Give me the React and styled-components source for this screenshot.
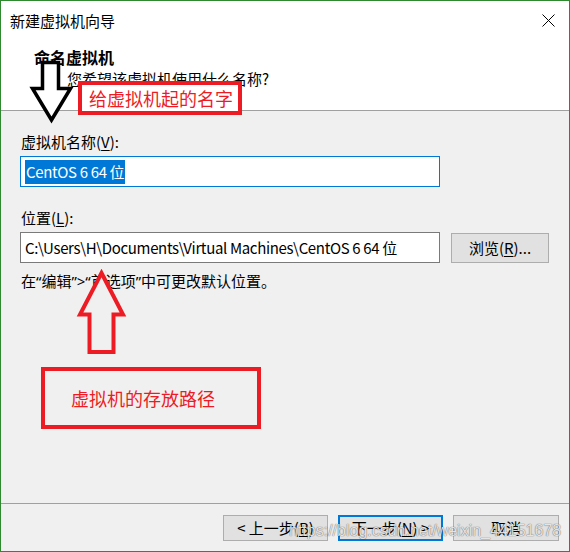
import styled, { createGlobalStyle } from "styled-components";

const GlobalStyle = createGlobalStyle`
  html, body {
    margin: 0;
    padding: 0;
    background: #ffffff;
  }
  * {
    box-sizing: border-box;
  }
`;

const RED = "#ed1c24";

const Window = styled.div`
  position: relative;
  width: 570px;
  height: 552px;
  border: 1px solid #2f8a2f;
  display: flex;
  flex-direction: column;
  background: #f0f0f0;
  font-family: "Noto Sans CJK SC", "Noto Sans", sans-serif;
  font-size: 15px;
  color: #000;
  overflow: hidden;
`;

const Top = styled.div`
  background: #fff;
  height: 110px;
  border-bottom: 1px solid #a0a0a0;
  display: flex;
  flex-direction: column;
`;

const TitleBar = styled.div`
  height: 39px;
  display: flex;
  align-items: center;
  justify-content: space-between;
  padding: 0 14px 0 9px;
  line-height: 20px;
`;

const CloseBtn = styled.div`
  width: 14px;
  height: 14px;
  display: flex;
  align-items: center;
  justify-content: center;
`;

const Heading = styled.div`
  margin-top: 6px;
  padding-left: 33px;
  font-weight: bold;
  font-size: 16px;
  line-height: 22px;
`;

const SubHeading = styled.div`
  padding-left: 66px;
  line-height: 22px;
`;

const Body = styled.div`
  flex: 1;
  padding: 21px 0 0 19px;
  display: flex;
  flex-direction: column;
`;

const Label = styled.div`
  padding-left: 1px;
  line-height: 20px;
  margin-top: ${(p) => p.$mt || 0}px;
  margin-bottom: 4px;
  u {
    text-decoration: underline;
    text-underline-offset: 2px;
  }
`;

const Hint = styled.div`
  padding-left: 1px;
  line-height: 20px;
  font-family: "Noto Sans", "Noto Sans CJK SC", sans-serif;
`;

const Field = styled.div`
  width: 420px;
  height: 31px;
  background: #fff;
  border: 1px solid ${(p) => (p.$focused ? "#0078d7" : "#7a7a7a")};
  display: flex;
  align-items: center;
  padding-left: 4px;
  white-space: nowrap;
  overflow: hidden;
  letter-spacing: -0.35px;
`;

const Selected = styled.span`
  background: #0078d7;
  color: #fff;
  line-height: 24px;
  padding: 0 1px;
`;

const FieldRow = styled.div`
  display: flex;
  align-items: center;
  gap: 11px;
  margin-bottom: 8px;
`;

const Button = styled.div`
  width: ${(p) => p.$w || 105}px;
  height: ${(p) => p.$h || 26}px;
  background: #e1e1e1;
  border: ${(p) => (p.$default ? "2px solid #0078d7" : "1px solid #adadad")};
  display: flex;
  align-items: center;
  justify-content: center;
  line-height: 20px;
  u {
    text-decoration: underline;
    text-underline-offset: 2px;
  }
`;

const Footer = styled.div`
  height: 48px;
  border-top: 1px solid #a0a0a0;
  display: flex;
  justify-content: flex-end;
  align-items: flex-start;
  padding: 11px 10px 0 0;
  gap: 10px;
`;

/* annotations drawn over the dialog */
const Overlay = styled.div`
  position: absolute;
  left: ${(p) => p.$x}px;
  top: ${(p) => p.$y}px;
  pointer-events: none;
`;

const Callout = styled.div`
  position: absolute;
  left: ${(p) => p.$x}px;
  top: ${(p) => p.$y}px;
  width: ${(p) => p.$w}px;
  height: ${(p) => p.$h}px;
  border: 4px solid ${RED};
  background: ${(p) => p.$bg};
  color: ${RED};
  font-size: 18px;
  line-height: 24px;
  display: flex;
  align-items: center;
  padding-left: ${(p) => p.$pl}px;
  white-space: nowrap;
`;

const Watermark = styled.div`
  position: absolute;
  left: 288px;
  top: 519px;
  font-family: "Liberation Sans", Arial, sans-serif;
  font-size: 16px;
  line-height: 22px;
  color: rgba(255, 255, 255, 0.85);
  text-shadow: 0 0 1px rgba(0, 0, 0, 0.55), 0 0 1px rgba(0, 0, 0, 0.35);
  white-space: nowrap;
  pointer-events: none;
`;

const App = () => {
  return (
    <>
      <GlobalStyle />
      <Window>
        <Top>
          <TitleBar>
            <span>新建虚拟机向导</span>
            <CloseBtn>
              <svg width="13" height="13" viewBox="0 0 13 13">
                <path d="M0.5 0.5 L12.5 12.5 M12.5 0.5 L0.5 12.5" stroke="#000" strokeWidth="1" />
              </svg>
            </CloseBtn>
          </TitleBar>
          <Heading>命名虚拟机</Heading>
          <SubHeading>您希望该虚拟机使用什么名称?</SubHeading>
        </Top>

        <Body>
          <Label>
            虚拟机名称(<u>V</u>):
          </Label>
          <Field $focused>
            <Selected>CentOS 6 64 位</Selected>
          </Field>

          <Label $mt={21}>
            位置(<u>L</u>):
          </Label>
          <FieldRow>
            <Field>C:\Users\H\Documents\Virtual Machines\CentOS 6 64 位</Field>
            <Button $w={98} $h={30}>
              浏览(<u>R</u>)...
            </Button>
          </FieldRow>
          <Hint>在“编辑”&gt;“首选项”中可更改默认位置。</Hint>
        </Body>

        <Footer>
          <Button>
            &lt; 上一步(<u>B</u>)
          </Button>
          <Button $default>
            下一步(<u>N</u>) &gt;
          </Button>
          <Button $w={106}>取消</Button>
        </Footer>

        <Overlay $x={28} $y={58}>
          <svg width="46" height="66" viewBox="0 0 46 66">
            <path
              d="M13.5 3.5 H29.5 V29.5 H41.5 L22.5 61 L3.5 29.5 H13.5 Z"
              fill="#fff"
              stroke="#000"
              strokeWidth="3.5"
              strokeLinejoin="miter"
            />
          </svg>
        </Overlay>

        <Callout $x={77} $y={80} $w={164} $h={34} $bg="#fff" $pl={7}>
          给虚拟机起的名字
        </Callout>

        <Overlay $x={74} $y={268}>
          <svg width="54" height="88" viewBox="0 0 54 88">
            <path
              d="M26.5 4 L48 45.5 H38.5 V83 H14.5 V45.5 H5 Z"
              fill="#f0f0f0"
              stroke={RED}
              strokeWidth="4"
              strokeLinejoin="miter"
            />
          </svg>
        </Overlay>

        <Callout $x={40} $y={366} $w={220} $h={62} $bg="#f0f0f0" $pl={26}>
          虚拟机的存放路径
        </Callout>

        <Watermark>https://blog.csdn.net/weixin_44151678</Watermark>
      </Window>
    </>
  );
};

export default App;
